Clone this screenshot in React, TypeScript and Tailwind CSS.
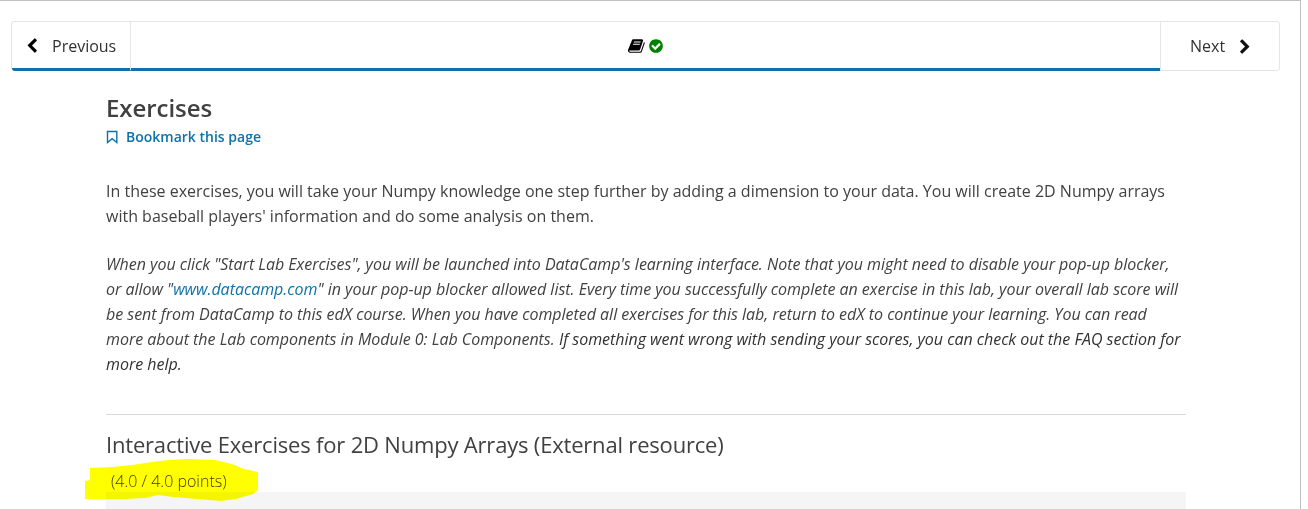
import React from "react";

function Glyph({ d, className = "" }: { d: string; className?: string }) {
  return (
    <svg viewBox="0 0 1792 1792" preserveAspectRatio="none" className={`h-4 shrink-0 fill-current ${className}`} aria-hidden="true">
      <path d={d} />
    </svg>
  );
}

const chevronLeft =
  "M1427 301l-531 531 531 531q19 19 19 45t-19 45l-166 166q-19 19-45 19t-45-19l-742-742q-19-19-19-45t19-45l742-742q19-19 45-19t45 19l166 166q19 19 19 45t-19 45z";
const checkCircle =
  "M1412 734q0-28-18-46l-91-90q-19-19-45-19t-45 19l-408 407-226-226q-19-19-45-19t-45 19l-91 90q-18 18-18 46 0 27 18 45l362 362q19 19 45 19 27 0 46-19l543-543q18-18 18-45zm252 162q0 209-103 385.500t-279.500 279.500-385.500 103-385.500-103-279.500-279.500-103-385.500 103-385.500 279.500-279.500 385.500-103 385.500 103 279.500 279.500 103 385.500z";
const book =
  "M1639 478q40 57 18 129l-275 906q-19 64-76.500 107.500t-122.500 43.500h-923q-77 0-148.500-53.500t-99.500-131.500q-24-67-2-127 0-4 3-27t4-37q1-8-3-21.500t-3-19.500q2-11 8-21t16.500-23.500 16.500-23.500q23-38 45-91.500t30-91.500q3-10 .5-30t-.5-28q3-11 17-28t17-23q21-36 42-92t25-90q1-9-2.500-32t.5-28q4-13 22-30.500t22-22.500q19-26 42.500-84.500t27.500-96.500q1-8-3-25.500t-2-26.500q2-8 9-18t18-23 17-21q8-12 16.500-30.500t15-35 16-36 19.500-32 26.500-23.500 36-11.500 47.500 5.500l-1 3q38-9 51-9h761q74 0 114 56t18 130l-274 906q-36 119-71.500 153.500t-128.500 34.500h-869q-27 0-38 15-11 16-1 43 24 70 144 70h923q29 0 56-15.500t35-41.500l300-987q7-22 5-57 38 15 59 43zm-1064 2q-4 13 2 22.500t20 9.500h608q13 0 25.500-9.500t16.500-22.500l21-64q4-13-2-22.500t-20-9.500h-608q-13 0-25.500 9.500t-16.500 22.500zm-83 256q-4 13 2 22.500t20 9.500h608q13 0 25.500-9.500t16.500-22.500l21-64q4-13-2-22.500t-20-9.500h-608q-13 0-25.500 9.500t-16.500 22.500z";

function SequenceNav() {
  return (
    <nav className="flex h-[50px] rounded-[3px] border border-[#e5e5e5] text-base text-[#313131]">
      <button className="-mb-px flex w-[119px] items-center rounded-bl-[3px] border-r border-b-3 border-r-[#e5e5e5] border-b-[#0e71a9] pt-[2px] pl-3">
        <Glyph d={chevronLeft} className="w-4 text-black" />
        <span className="ml-3">Previous</span>
      </button>
      <div className="-mb-px flex flex-1 items-center justify-center gap-[2px] border-b-3 border-[#0e71a9] pt-px">
        <Glyph d={book} className="w-[18px] text-black" />
        <Glyph d={checkCircle} className="w-4 text-[#008100]" />
      </div>
      <button className="flex w-[119px] items-center border-l border-[#e5e5e5] pl-[29px]">
        <span>Next</span>
        <Glyph d={chevronLeft} className="ml-3 w-4 rotate-180 text-[#111111]" />
      </button>
    </nav>
  );
}

export default function App() {
  return (
    <div className="h-[509px] overflow-hidden bg-white font-['Open_Sans',sans-serif]">
      <div className="h-full w-[1301px] border-t border-r border-[#c0c0c0] pt-5 pr-5 pl-[11px]">
        <SequenceNav />
        <main className="ml-[95px] w-[1080px] pt-[21px] text-[#414141]">
          <h2 className="text-2xl leading-[32px] font-semibold tracking-[-0.05px]">Exercises</h2>
          <button className="flex h-[26px] items-center text-sm font-semibold text-[#0e71a9]">
            <svg viewBox="0 0 12 14" className="mr-2 h-[14px] w-3" fill="none" stroke="currentColor" strokeWidth="1.4">
              <path d="M1.500 1.500h9.300v11L6.150 8.700l-4.650 3.800z" />
            </svg>
            Bookmark this page
          </button>
          <p className="mt-[29px] text-base leading-[25px] whitespace-nowrap">
            In these exercises, you will take your Numpy knowledge one step further by adding a dimension to your data. You will create 2D Numpy arrays
            <br />
            with baseball players' information and do some analysis on them.
          </p>
          <p className="mt-[23px] text-base leading-[25px] tracking-[-0.022px] whitespace-nowrap italic">
            When you click "Start Lab Exercises", you will be launched into DataCamp's learning interface. Note that you might need to disable your pop-up blocker,
            <br />
            or allow "<a className="text-[#0e71a9]">www.datacamp.com</a>" in your pop-up blocker allowed list. Every time you successfully complete an exercise in this lab, your overall lab score will
            <br />
            be sent from DataCamp to this edX course. When you have completed all exercises for this lab, return to edX to continue your learning. You can read
            <br />
            more about the Lab components in Module 0: Lab Components. <span className="text-[#313131]">If something went wrong with sending your scores, you can check out the FAQ section for</span>
            <br />
            <span className="text-[#313131]">more help.</span>
          </p>
          <section className="mt-[37px] border-t border-[#d9d9d9] pt-[13px]">
            <h3 className="text-[22px] leading-[32px] tracking-[-0.19px] whitespace-nowrap">Interactive Exercises for 2D Numpy Arrays (External resource)</h3>
            <div className="relative h-[32px] pt-[9px] pl-[5px]">
              <p className="text-base leading-[24px] font-light whitespace-nowrap">(4.0 / 4.0 points)</p>
              <svg viewBox="0 0 174 44" className="pointer-events-none absolute -top-[2px] -left-[21px] z-10 h-[44px] w-[174px] fill-[#ffff00] mix-blend-multiply" aria-hidden="true">
                <path d="M5 10L27 9L47 7L67 4L84 2L102 1L130 2L147 6L159 11L173 14V32L168 36L151 41L136 43L112 41L88 39L73 37L60 40L40 41H0V23L5 22Z" />
              </svg>
            </div>
            <div className="h-[40px] bg-[#f5f5f5]" />
          </section>
        </main>
      </div>
    </div>
  );
}
